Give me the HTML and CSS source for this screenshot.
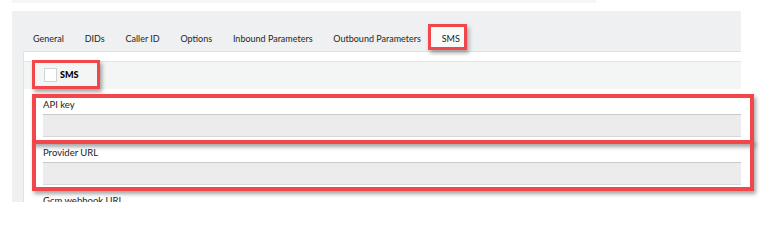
FILE: index.html
```html
<!DOCTYPE html>
<html>
<head>
<meta charset="utf-8">
<link rel="stylesheet" href="styles.css">
</head>
<body>
<div class="page">
  <div class="topbar"></div>
  <div class="panel">
    <div class="tabs">
      <div class="tab">General</div>
      <div class="tab">DIDs</div>
      <div class="tab">Caller ID</div>
      <div class="tab">Options</div>
      <div class="tab">Inbound Parameters</div>
      <div class="tab">Outbound Parameters</div>
      <div class="tab active">SMS</div>
    </div>
    <div class="content">
      <div class="sms-row">
        <span class="checkbox"></span>
        <span class="sms-label">SMS</span>
      </div>
      <div class="field">
        <div class="label">API key</div>
        <div class="input"></div>
      </div>
      <div class="field">
        <div class="label">Provider URL</div>
        <div class="input"></div>
      </div>
      <div class="field">
        <div class="label">Gcm webhook URL</div>
        <div class="input"></div>
      </div>
    </div>
  </div>
  <div class="mark mark-tab"></div>
  <div class="mark mark-check"></div>
  <div class="mark mark-api"></div>
  <div class="mark mark-url"></div>
</div>
</body>
</html>
```

FILE: styles.css
```css
html, body {
  margin: 0;
  padding: 0;
  background: #ffffff;
}

body {
  font-family: Lato, "Liberation Sans", Arial, sans-serif;
  font-size: 9px;
  color: #2b2b2b;
}

.page {
  position: relative;
  width: 784px;
  height: 219px;
  overflow: hidden;
}

.topbar {
  margin-left: 12px;
  width: 584px;
  height: 3px;
  background: #f6f6f6;
}

.panel {
  margin-top: 8px;
  margin-left: 12px;
  width: 729px;
  height: 191px;
  background: #eef0f1;
  overflow: hidden;
}

.tabs {
  display: flex;
  height: 40px;
  padding-left: 10.6px;
  box-sizing: border-box;
}

.tab {
  padding: 21px 10.4px 5px;
  line-height: 14px;
  color: #262626;
}

.tab.active {
  background: #f8f9f9;
  margin-top: 16px;
  padding-top: 5px;
  color: #1a1a1a;
}

.content {
  margin-left: 11px;
  background: #ffffff;
  border-left: 1px solid #dfe2e3;
  border-top: 1px solid #dfe2e3;
  height: 160px;
}

.sms-row {
  margin-top: 9px;
  border-top: 1px solid #e3e6e6;
  background: #f4f5f5;
  height: 27px;
  padding-left: 20px;
  display: flex;
  align-items: flex-start;
}

.checkbox {
  display: block;
  width: 11px;
  height: 12px;
  margin-top: 6px;
  background: #ffffff;
  border: 1px solid #cfd6d8;
}

.sms-label {
  margin-top: 7px;
  margin-left: 3px;
  font-weight: 900;
  font-size: 9px;
  line-height: 12px;
  color: #000000;
}

.field {
  padding-top: 9px;
  padding-left: 19px;
}

.label {
  font-size: 9.5px;
  line-height: 14px;
  margin-bottom: 2px;
  color: #222222;
}

.input {
  height: 21px;
  background: #ececec;
  border-top: 1px solid #c9c9c9;
  border-bottom: 1px solid #d5d9d9;
}

.mark {
  position: absolute;
  box-sizing: border-box;
  border: 3px solid #f2464a;
  box-shadow: 2px 3px 4px rgba(0, 0, 0, 0.35);
}

.mark-tab {
  left: 428px;
  top: 24px;
  width: 39px;
  height: 26px;
}

.mark-check {
  left: 32px;
  top: 60px;
  width: 68px;
  height: 29px;
}

.mark-api {
  left: 32px;
  top: 94px;
  width: 722px;
  height: 50px;
  border-width: 4px;
}

.mark-url {
  left: 32px;
  top: 140px;
  width: 722px;
  height: 51px;
  border-width: 4px;
}
```
